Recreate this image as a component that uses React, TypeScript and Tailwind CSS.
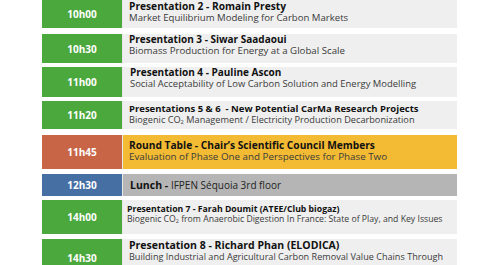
import React from "react";

type Row = {
  time: string;
  timeBg: string;
  panelBg: string;
  h: string;
  mt: string;
  pt: string;
  pl: string;
  titleCls: string;
  subCls: string;
  lh: string;
  title: React.ReactNode;
  sub?: React.ReactNode;
  lunch?: boolean;
};

const CO2 = (
  <>
    CO<sub className="text-[0.62em] align-baseline relative top-[0.25em]">2</sub>
  </>
);

const rows: Row[] = [
  {
    time: "10h00",
    timeBg: "bg-[#4ba83d]",
    panelBg: "bg-[#efefef]",
    h: "h-[28px]",
    mt: "mt-0",
    pt: "pt-[1px]",
    pl: "pl-[6px]",
    titleCls: "text-[10.2px]",
    subCls: "text-[9.6px]",
    lh: "leading-[11px]",
    title: "Presentation 2 - Romain Presty",
    sub: "Market Equilibrium Modeling for Carbon Markets",
  },
  {
    time: "10h30",
    timeBg: "bg-[#4ba83d]",
    panelBg: "bg-[#efefef]",
    h: "h-[29px]",
    mt: "mt-[6px]",
    pt: "pt-[0px]",
    pl: "pl-[6px]",
    titleCls: "text-[10px]",
    subCls: "text-[9.7px]",
    lh: "leading-[11px]",
    title: "Presentation 3 - Siwar Saadaoui",
    sub: "Biomass Production for Energy at a Global Scale",
  },
  {
    time: "11h00",
    timeBg: "bg-[#4ba83d]",
    panelBg: "bg-[#efefef]",
    h: "h-[30px]",
    mt: "mt-[4px]",
    pt: "pt-0",
    pl: "pl-[7px]",
    titleCls: "text-[10px]",
    subCls: "text-[9.45px]",
    lh: "leading-[11px]",
    title: "Presentation 4 - Pauline Ascon",
    sub: "Social Acceptability of Low Carbon Solution and Energy Modelling",
  },
  {
    time: "11h20",
    timeBg: "bg-[#4ba83d]",
    panelBg: "bg-[#efefef]",
    h: "h-[28px]",
    mt: "mt-[4px]",
    pt: "pt-[2px]",
    pl: "pl-[6px]",
    titleCls: "text-[9.5px]",
    subCls: "text-[9.2px]",
    lh: "leading-[11px]",
    title: "Presentations 5 & 6\u00a0 - New Potential CarMa Research Projects",
    sub: <>Biogenic {CO2} Management / Electricity Production Decarbonization</>,
  },
  {
    time: "11h45",
    timeBg: "bg-[#c86547]",
    panelBg: "bg-[#f3ba33]",
    h: "h-[34px]",
    mt: "mt-[6px]",
    pt: "pt-[5px]",
    pl: "pl-[6px]",
    titleCls: "text-[10.2px]",
    subCls: "text-[9.8px]",
    lh: "leading-[11px]",
    title: "Round Table - Chair\u2019s Scientific Council Members",
    sub: "Evaluation of Phase One and Perspectives for Phase Two",
  },
  {
    time: "12h30",
    timeBg: "bg-[#466fa4]",
    panelBg: "bg-[#b5b5b5]",
    h: "h-[22px]",
    mt: "mt-[5px]",
    pt: "pt-0",
    pl: "pl-[7px]",
    titleCls: "text-[10px]",
    subCls: "text-[9px]",
    lh: "leading-none",
    title: "Lunch",
    lunch: true,
  },
  {
    time: "14h00",
    timeBg: "bg-[#4ba83d]",
    panelBg: "bg-[#efefef]",
    h: "h-[34px]",
    mt: "mt-[4px]",
    pt: "pt-[4px]",
    pl: "pl-[4px]",
    titleCls: "text-[8.7px]",
    subCls: "text-[8.7px]",
    lh: "leading-[10px]",
    title: "Presentation 7 - Farah Doumit (ATEE/Club biogaz)",
    sub: <>Biogenic {CO2} from Anaerobic Digestion In France: State of Play, and Key Issues</>,
  },
  {
    time: "14h30",
    timeBg: "bg-[#4ba83d]",
    panelBg: "bg-[#efefef]",
    h: "h-[37px]",
    mt: "mt-[5px]",
    pt: "pt-0",
    pl: "pl-[6px]",
    titleCls: "text-[10.5px]",
    subCls: "text-[9.1px]",
    lh: "leading-[12px]",
    title: "Presentation 8 - Richard Phan (ELODICA)",
    sub: "Building Industrial and Agricultural Carbon Removal Value Chains Through",
  },
];

export default function App() {
  return (
    <div
      className="w-[502px] h-[265px] overflow-hidden bg-white pl-[42px]"
      style={{ fontFamily: '"Open Sans", "Noto Sans", sans-serif' }}
    >
      <div className="flex flex-col w-[415px]">
        {rows.map((r) => (
          <div key={r.time} className={`flex shrink-0 ${r.h} ${r.mt}`}>
            <div
              className={`w-[80px] shrink-0 ${r.timeBg} flex items-center justify-center text-white font-bold text-[10px] leading-none`}
            >
              {r.time}
            </div>
            <div className="w-[1px] shrink-0 bg-[#e8e8e8]" />
            <div className={`flex-1 ${r.panelBg} ${r.pl} ${r.pt} ${r.lunch ? "flex items-center" : ""}`}>
              {r.lunch ? (
                <div className="text-[10.5px] text-[#111] leading-none whitespace-nowrap">
                  <span className="font-bold">Lunch -</span>{" "}
                  <span className="text-[10px] text-[#222]">IFPEN Séquoia 3rd floor</span>
                </div>
              ) : (
                <>
                  <div className={`${r.titleCls} font-bold text-[#111] ${r.lh} whitespace-nowrap`}>
                    {r.title}
                  </div>
                  <div className={`${r.subCls} text-[#3a3a3a] ${r.lh} whitespace-nowrap`}>{r.sub}</div>
                </>
              )}
            </div>
          </div>
        ))}
      </div>
    </div>
  );
}
